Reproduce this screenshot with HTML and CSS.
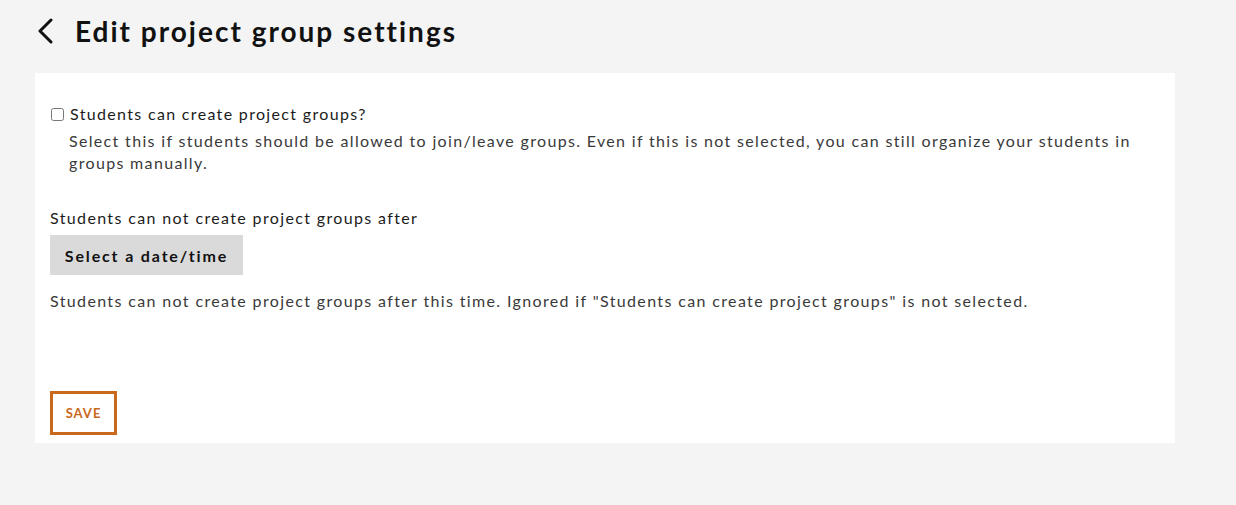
FILE: index.html
```html
<!DOCTYPE html>
<html>
<head>
<meta charset="utf-8">
<link rel="stylesheet" href="styles.css">
</head>
<body>
<div class="page">
  <header class="header">
    <svg class="back" width="18" height="26" viewBox="0 0 18 26"><path d="M15 2 L4 13 L15 24" fill="none" stroke="#111" stroke-width="3" stroke-linecap="round" stroke-linejoin="round"/></svg>
    <h1 class="title">Edit project group settings</h1>
  </header>
  <main class="card">
    <div class="field">
      <label class="check-row"><input type="checkbox" class="check"><span>Students can create project groups?</span></label>
      <p class="desc">Select this if students should be allowed to join/leave groups. Even if this is not selected, you can still organize your students in groups manually.</p>
    </div>
    <div class="field2">
      <div class="label">Students can not create project groups after</div>
      <button class="date-btn">Select a date/time</button>
      <p class="help">Students can not create project groups after this time. Ignored if "Students can create project groups" is not selected.</p>
    </div>
    <button class="save">SAVE</button>
  </main>
</div>
</body>
</html>
```
FILE: styles.css
```css
html, body { margin: 0; padding: 0; background: #f4f4f4; }
body { font-family: "Lato", "Noto Sans", sans-serif; color: #222; width: 1236px; height: 505px; overflow: hidden; }
.page { padding: 0 61px 0 35px; }
.header { height: 73px; display: flex; align-items: center; padding-bottom: 12px; box-sizing: border-box; }
.back { margin-left: 1px; margin-top: 0; }
.title { margin: 0 0 0 21px; font-size: 28px; font-weight: 700; letter-spacing: 2px; color: #111; line-height: 34px; }
.card { background: #fff; padding: 30px 15px 8px 15px; height: 370px; box-sizing: border-box; }
.field { font-size: 16px; letter-spacing: 1.33px; }
.check-row { display: flex; align-items: center; line-height: 22px; color: #1c1c1c; }
.check { margin: 0 6px 0 1px; width: 13px; height: 13px; }
.desc { margin: 5px 0 0 19px; line-height: 22px; color: #3a3a3a; }
.field2 { margin-top: 33px; font-size: 16px; letter-spacing: 1.36px; }
.label { line-height: 22px; color: #1c1c1c; }
.date-btn { margin-top: 6px; height: 40px; width: 193px; border: none; background: #dadada; font-family: inherit; font-size: 16px; font-weight: 700; letter-spacing: 1.85px; color: #111; padding: 0; cursor: pointer; }
.help { margin: 15px 0 0 0; line-height: 22px; color: #3a3a3a; }
.save { margin-top: 79px; width: 67px; height: 44px; background: #fff; border: 3px solid #c8691c; color: #c8691c; font-family: inherit; font-weight: 700; font-size: 13px; letter-spacing: 1px; padding: 0; }
```
